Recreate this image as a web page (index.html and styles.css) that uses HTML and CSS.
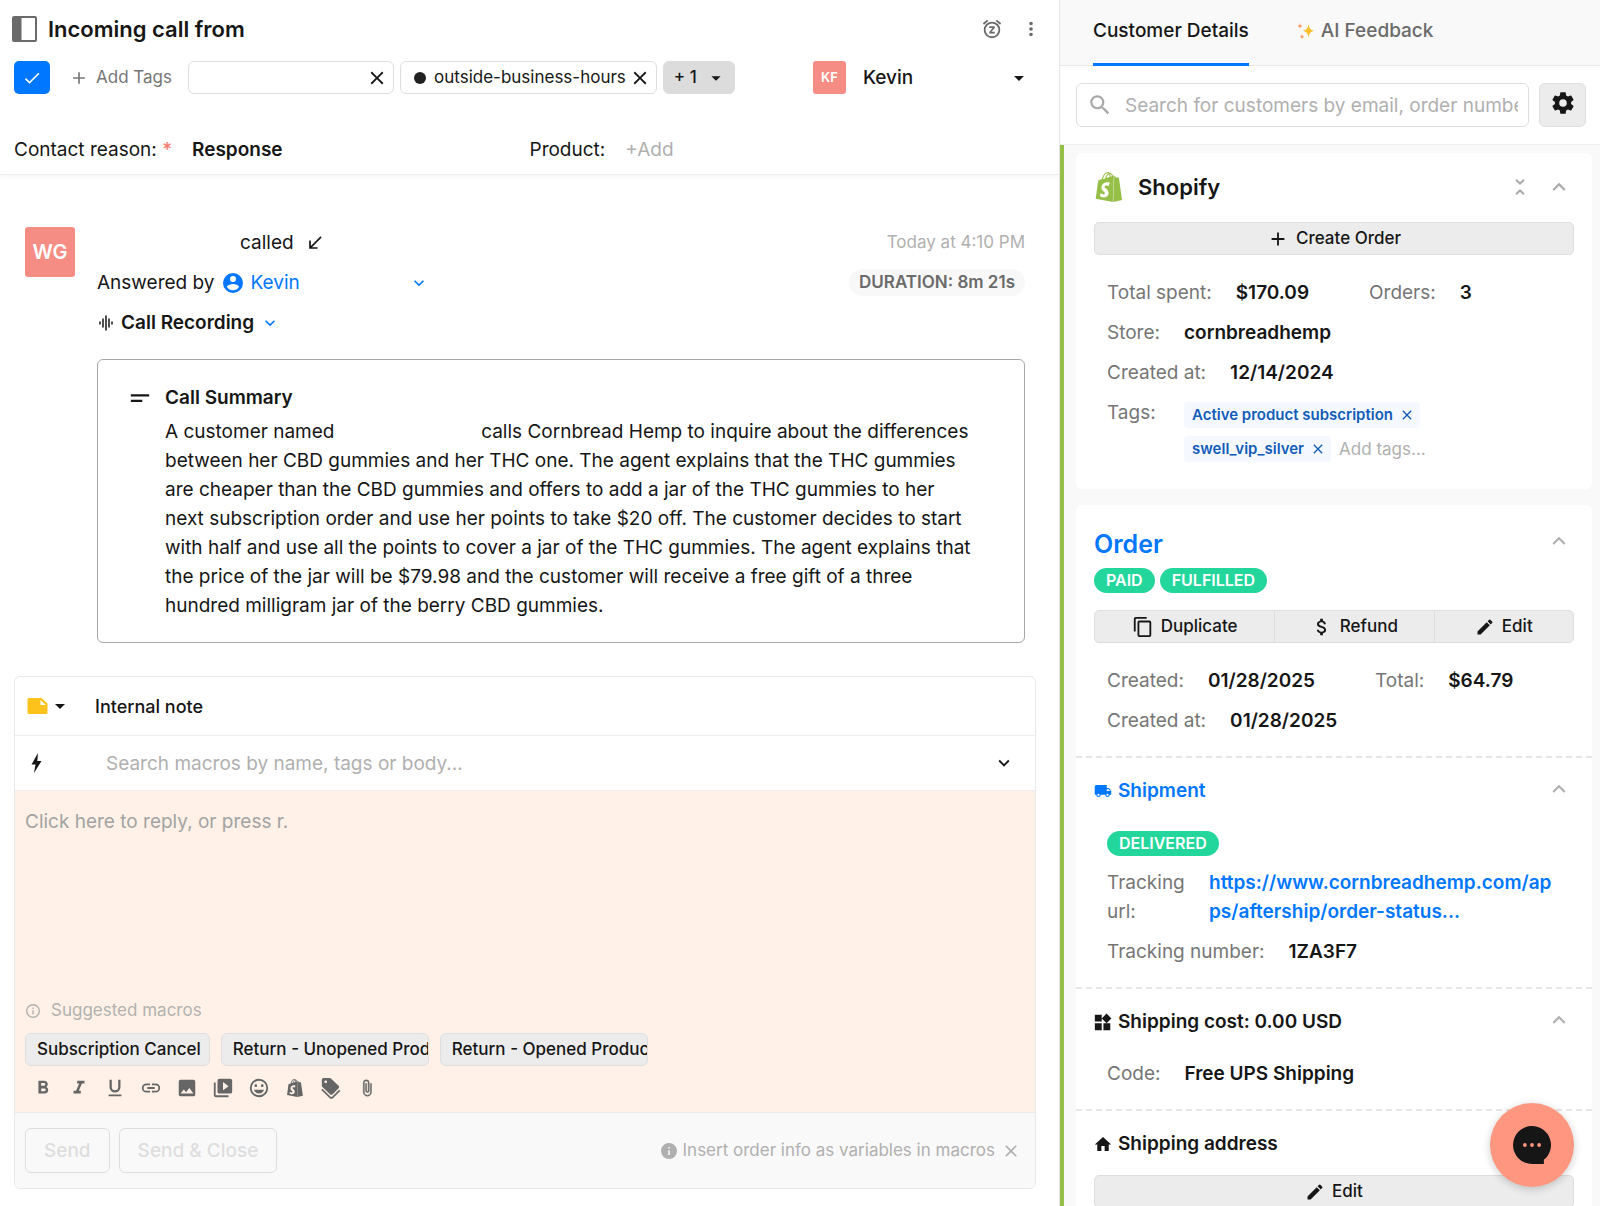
FILE: index.html
```html
<!DOCTYPE html>
<html lang="en">
<head>
<meta charset="utf-8">
<meta name="viewport" content="width=device-width, initial-scale=1">
<title>Incoming call</title>
<link rel="stylesheet" href="styles.css">
</head>
<body>
<svg class="sprite" aria-hidden="true">
  <symbol id="i-panel" viewBox="0 0 25 26"><rect x="1" y="1" width="23" height="24" rx="1" fill="none" stroke="currentColor" stroke-width="2"/><path d="M1 1h8.500v24H1z"/></symbol>
  <symbol id="i-check" viewBox="0 0 24 24"><path d="M9 16.170 4.830 12l-1.420 1.410L9 19 21 7l-1.410-1.410z"/></symbol>
  <symbol id="i-plus" viewBox="0 0 24 24"><path d="M19 13h-6v6h-2v-6H5v-2h6V5h2v6h6v2z"/></symbol>
  <symbol id="i-close" viewBox="0 0 24 24"><path d="M19 6.410 17.590 5 12 10.590 6.410 5 5 6.410 10.590 12 5 17.590 6.410 19 12 13.410 17.590 19 19 17.590 13.410 12z"/></symbol>
  <symbol id="i-drop" viewBox="0 0 24 24"><path d="m7 10 5 5 5-5z"/></symbol>
  <symbol id="i-snooze" viewBox="0 0 24 24"><path d="m22 5.720-4.600-3.860-1.290 1.530 4.600 3.860L22 5.720zM7.880 3.390 6.600 1.860 2 5.710l1.290 1.530 4.590-3.850zM12 4a9 9 0 1 0 0 18 9 9 0 0 0 0-18zm0 16a7 7 0 1 1 0-14 7 7 0 0 1 0 14zM9 11h3.630L9 15.200V17h6v-2h-3.630L15 10.800V9H9v2z"/></symbol>
  <symbol id="i-more" viewBox="0 0 24 24"><path d="M12 8a2 2 0 1 0 0-4 2 2 0 0 0 0 4zm0 2a2 2 0 1 0 0 4 2 2 0 0 0 0-4zm0 6a2 2 0 1 0 0 4 2 2 0 0 0 0-4z"/></symbol>
  <symbol id="i-southwest" viewBox="0 0 24 24"><path d="M20 5.410 18.590 4 7 15.590V9H5v10h10v-2H8.410z"/></symbol>
  <symbol id="i-user" viewBox="2 2 20 20"><path d="M12 2a10 10 0 1 0 0 20 10 10 0 0 0 0-20zm0 3a3 3 0 1 1 0 6 3 3 0 0 1 0-6zm0 14.200a7.200 7.200 0 0 1-6-3.220c.03-1.990 4-3.080 6-3.080s5.970 1.090 6 3.080a7.200 7.200 0 0 1-6 3.220z"/></symbol>
  <symbol id="i-down" viewBox="0 0 24 24"><path d="M7.410 8.590 12 13.170l4.590-4.580L18 10l-6 6-6-6z"/></symbol>
  <symbol id="i-up" viewBox="0 0 24 24"><path d="m12 8-6 6 1.410 1.410L12 10.830l4.590 4.580L18 14z"/></symbol>
  <symbol id="i-collapse" viewBox="0 0 24 24"><path d="M7.410 18.590 8.830 20 12 16.830 15.170 20l1.410-1.410L12 14l-4.590 4.590zm9.180-13.180L15.170 4 12 7.170 8.830 4 7.410 5.410 12 10l4.590-4.590z"/></symbol>
  <symbol id="i-wave" viewBox="0 0 24 24"><path d="M7 18h2V6H7v12zm4 4h2V2h-2v20zm-8-8h2v-4H3v4zm12 4h2V6h-2v12zm4-8v4h2v-4h-2z"/></symbol>
  <symbol id="i-text" viewBox="0 0 24 24"><path d="M2 8h20v2.300H2zM2 14h12.500v2.300H2z"/></symbol>
  <symbol id="i-note" viewBox="0 0 20 16"><path d="M1.500 0H14l6 5.500v9a1.500 1.500 0 0 1-1.500 1.500h-17A1.500 1.500 0 0 1 0 14.500v-13A1.500 1.500 0 0 1 1.500 0z" fill="#fdc31c"/><path d="M13 2v5h5.200z" fill="#fff"/></symbol>
  <symbol id="i-bolt" viewBox="0 0 12 20"><path d="M7.500 0 1 11.500h4L3.500 20 11 8H6.800z"/></symbol>
  <symbol id="i-info-o" viewBox="2 2 20 20"><path d="M11 7h2v2h-2zm0 4h2v6h-2zm1-9a10 10 0 1 0 0 20 10 10 0 0 0 0-20zm0 18a8 8 0 1 1 0-16 8 8 0 0 1 0 16z"/></symbol>
  <symbol id="i-info" viewBox="2 2 20 20"><path d="M12 2a10 10 0 1 0 0 20 10 10 0 0 0 0-20zm1 15h-2v-6h2v6zm0-8h-2V7h2v2z"/></symbol>
  <symbol id="i-bold" viewBox="0 0 24 24"><path d="M15.600 10.790c.97-.67 1.650-1.770 1.650-2.790 0-2.260-1.750-4-4-4H7v14h7.040c2.090 0 3.710-1.700 3.710-3.790 0-1.520-.86-2.820-2.150-3.420zM10 6.500h3a1.500 1.500 0 0 1 0 3h-3v-3zm3.500 9H10v-3h3.500a1.500 1.500 0 0 1 0 3z"/></symbol>
  <symbol id="i-italic" viewBox="0 0 24 24"><path d="M10 4v3h2.210l-3.420 8H6v3h8v-3h-2.210l3.420-8H18V4z"/></symbol>
  <symbol id="i-underline" viewBox="0 0 24 24"><path d="M12 17a6 6 0 0 0 6-6V3h-2.500v8a3.500 3.500 0 0 1-7 0V3H6v8a6 6 0 0 0 6 6zm-7 2v2h14v-2H5z"/></symbol>
  <symbol id="i-link" viewBox="0 0 24 24"><path d="M3.900 12A3.100 3.100 0 0 1 7 8.900h4V7H7a5 5 0 0 0 0 10h4v-1.900H7A3.100 3.100 0 0 1 3.900 12zM8 13h8v-2H8v2zm9-6h-4v1.900h4a3.100 3.100 0 0 1 0 6.200h-4V17h4a5 5 0 0 0 0-10z"/></symbol>
  <symbol id="i-image" viewBox="0 0 24 24"><path d="M21 19V5a2 2 0 0 0-2-2H5a2 2 0 0 0-2 2v14a2 2 0 0 0 2 2h14a2 2 0 0 0 2-2zM8.500 13.500l2.500 3.010L14.500 12l4.500 6H5l3.500-4.500z"/></symbol>
  <symbol id="i-video" viewBox="0 0 24 24"><path d="M4 6H2v14a2 2 0 0 0 2 2h14v-2H4V6zm16-4H8a2 2 0 0 0-2 2v12a2 2 0 0 0 2 2h12a2 2 0 0 0 2-2V4a2 2 0 0 0-2-2zm-8 12.500v-9l6 4.500-6 4.500z"/></symbol>
  <symbol id="i-smile" viewBox="0 0 24 24"><path d="M11.990 2a10 10 0 1 0 .02 20 10 10 0 0 0-.02-20zM12 20a8 8 0 1 1 0-16 8 8 0 0 1 0 16zm3.500-9a1.500 1.500 0 1 0 0-3 1.500 1.500 0 0 0 0 3zm-7 0a1.500 1.500 0 1 0 0-3 1.500 1.500 0 0 0 0 3zm3.500 7a6 6 0 0 0 5.500-4h-11A6 6 0 0 0 12 18z"/></symbol>
  <symbol id="i-bag" viewBox="0 0 24 24"><path d="M15.337 23.979l7.216-1.561s-2.604-17.613-2.625-17.730c-.018-.116-.114-.192-.211-.192s-1.929-.136-1.929-.136-1.275-1.274-1.439-1.411c-.045-.037-.075-.057-.121-.074l-.914 21.104h.023zM11.710 11.305s-.81-.424-1.774-.424c-1.447 0-1.504.906-1.504 1.141 0 1.232 3.240 1.715 3.240 4.629 0 2.295-1.440 3.760-3.406 3.760-2.354 0-3.540-1.465-3.540-1.465l.646-2.086s1.245 1.066 2.280 1.066c.675 0 .975-.545.975-.932 0-1.619-2.654-1.694-2.654-4.359-.034-2.237 1.571-4.416 4.827-4.416 1.257 0 1.875.361 1.875.361l-.945 2.715-.02.01zM11.170.83c.136 0 .271.038.405.135-.984.465-2.064 1.639-2.508 3.992-.656.213-1.293.405-1.889.578C7.697 3.750 8.951.84 11.170.84V.83zm1.235 2.949v.135c-.754.232-1.583.484-2.394.736.466-1.777 1.333-2.645 2.085-2.971.193.501.309 1.176.309 2.100zm.539-2.234c.694.074 1.141.867 1.429 1.755-.349.114-.735.231-1.158.366v-.252c0-.752-.096-1.371-.271-1.871v.002zm2.992 1.289c-.02 0-.06.021-.078.021s-.289.075-.714.210c-.423-1.233-1.176-2.370-2.508-2.370h-.115C12.135.209 11.669 0 11.265 0 8.159 0 6.675 3.877 6.210 5.846c-1.194.365-2.063.636-2.160.674-.675.213-.694.232-.772.870-.075.462-1.830 14.063-1.830 14.063L15.009 24l.927-21.166z"/></symbol>
  <symbol id="i-tags" viewBox="0 0 24 24"><path d="M4 1h6.500a2 2 0 0 1 1.400.6l8.400 8a2 2 0 0 1 0 2.800l-6.500 6.300a2 2 0 0 1-2.800 0L2.600 11A2 2 0 0 1 2 9.600V3a2 2 0 0 1 2-2zm2.200 2.700a1.500 1.500 0 1 0 0 3 1.500 1.500 0 0 0 0-3z"/><path d="m2 13.500 9 8.700a2 2 0 0 0 2.800 0l7.700-7.700" fill="none" stroke="currentColor" stroke-width="1.800"/></symbol>
  <symbol id="i-clip" viewBox="0 0 24 24"><path d="M16.500 6v11.500a4 4 0 0 1-8 0V5a2.500 2.500 0 0 1 5 0v10.500a1 1 0 0 1-2 0V6H10v9.500a2.500 2.500 0 0 0 5 0V5a4 4 0 0 0-8 0v12.500a5.500 5.500 0 0 0 11 0V6h-1.500z" stroke="currentColor" stroke-width=".6"/></symbol>
  <symbol id="i-search" viewBox="0 0 24 24"><path d="M15.500 14h-.79l-.28-.27A6.470 6.470 0 0 0 16 9.500 6.500 6.500 0 1 0 9.500 16c1.610 0 3.090-.59 4.230-1.570l.27.28v.79l5 4.990L20.490 19l-4.990-5zm-6 0a4.500 4.500 0 1 1 0-9 4.500 4.500 0 0 1 0 9z"/></symbol>
  <symbol id="i-gear" viewBox="0 0 24 24"><path d="M19.430 12.980c.04-.32.07-.64.07-.98s-.03-.66-.07-.98l2.110-1.650a.5.5 0 0 0 .12-.64l-2-3.460a.5.5 0 0 0-.61-.22l-2.490 1a7.300 7.300 0 0 0-1.690-.98l-.38-2.650A.49.490 0 0 0 14 2h-4a.49.490 0 0 0-.49.420l-.38 2.650c-.61.250-1.170.590-1.690.980l-2.490-1a.5.5 0 0 0-.61.220l-2 3.460a.49.490 0 0 0 .12.640l2.110 1.650c-.04.320-.07.650-.07.980s.03.660.07.980l-2.110 1.650a.5.5 0 0 0-.12.640l2 3.460c.12.220.39.300.61.220l2.490-1c.52.400 1.080.730 1.690.980l.38 2.650c.03.240.24.420.49.420h4c.25 0 .46-.18.490-.42l.38-2.650c.61-.25 1.170-.59 1.690-.98l2.490 1c.23.090.49 0 .61-.22l2-3.460a.5.5 0 0 0-.12-.64l-2.110-1.650zM12 15.500a3.500 3.500 0 1 1 0-7 3.500 3.500 0 0 1 0 7z"/></symbol>
  <symbol id="i-sparkle" viewBox="0 0 18 18"><path d="M11.500 2c.8 4.500 1.600 5.500 5.500 6.700-3.900 1.300-4.700 2.300-5.500 6.800-.8-4.500-1.600-5.500-5.500-6.800 3.900-1.200 4.700-2.200 5.500-6.700z" fill="#fdbf2d"/><path d="M3 1c.4 2 .8 2.400 2.500 3C3.800 4.600 3.400 5 3 7c-.4-2-.8-2.400-2.500-3C2.200 3.400 2.600 3 3 1zM5 12c.4 1.800.7 2.200 2.200 2.800C5.700 15.400 5.400 15.800 5 17.600c-.4-1.800-.7-2.200-2.200-2.800C4.300 14.200 4.600 13.800 5 12z" fill="#fb9d6b"/></symbol>
  <symbol id="i-copy" viewBox="0 0 24 24"><path d="M16 1H4a2 2 0 0 0-2 2v14h2V3h12V1zm3 4H8a2 2 0 0 0-2 2v14a2 2 0 0 0 2 2h11a2 2 0 0 0 2-2V7a2 2 0 0 0-2-2zm0 16H8V7h11v14z"/></symbol>
  <symbol id="i-dollar" viewBox="0 0 24 24"><path d="M11.800 10.900c-2.270-.59-3-1.200-3-2.150 0-1.090 1.010-1.850 2.700-1.850 1.780 0 2.440.85 2.500 2.100h2.210c-.07-1.720-1.120-3.300-3.210-3.810V3h-3v2.160c-1.940.42-3.500 1.680-3.500 3.610 0 2.310 1.910 3.460 4.700 4.130 2.500.6 3 1.480 3 2.410 0 .69-.49 1.790-2.700 1.790-2.060 0-2.870-.92-2.980-2.100h-2.200c.12 2.190 1.760 3.420 3.680 3.830V21h3v-2.150c1.950-.37 3.500-1.500 3.500-3.550 0-2.840-2.430-3.810-4.700-4.400z"/></symbol>
  <symbol id="i-edit" viewBox="0 0 24 24"><path d="M3 17.250V21h3.750L17.810 9.940l-3.750-3.750L3 17.250zM20.710 7.040a1 1 0 0 0 0-1.410l-2.340-2.340a1 1 0 0 0-1.410 0l-1.830 1.830 3.750 3.750 1.830-1.830z"/></symbol>
  <symbol id="i-truck" viewBox="0 3 24 18"><path d="M20 8h-3V4H3a2 2 0 0 0-2 2v11h2a3 3 0 0 0 6 0h6a3 3 0 0 0 6 0h2v-5l-3-4zM6 18.500a1.500 1.500 0 1 1 0-3 1.500 1.500 0 0 1 0 3zm13.500-9 1.960 2.500H17V9.500h2.500zm-1.500 9a1.500 1.500 0 1 1 0-3 1.500 1.500 0 0 1 0 3z"/></symbol>
  <symbol id="i-widgets" viewBox="2 1 21 21"><path d="M13 13v8h8v-8h-8zM3 21h8v-8H3v8zM3 3v8h8V3H3zm13.660-1.310L11 7.340 16.660 13l5.660-5.660-5.660-5.650z"/></symbol>
  <symbol id="i-home" viewBox="1 1 22 21"><path d="M10 20v-6h4v6h5v-8h3L12 3 2 12h3v8z"/></symbol>
  <symbol id="i-chat" viewBox="0 0 40 40"><path d="M20 0a20 20 0 1 0 0 40h12.500V35.600A20 20 0 0 0 20 0z"/><g fill="#ff9780"><circle cx="12.500" cy="20" r="2"/><circle cx="20" cy="20" r="2"/><circle cx="27.500" cy="20" r="2"/></g></symbol>
</svg>

<div class="app">
  <main class="ticket">
    <header class="ticket-head">
      <div class="title-row">
        <button class="bare" aria-label="Toggle ticket list"><svg class="panel-icon grey"><use href="#i-panel"/></svg></button>
        <h1>Incoming call from</h1>
        <div class="title-actions">
          <button class="bare grey" aria-label="Snooze"><svg class="s22"><use href="#i-snooze"/></svg></button>
          <button class="bare grey" aria-label="More actions"><svg class="s22"><use href="#i-more"/></svg></button>
        </div>
      </div>
      <div class="tag-row">
        <button class="done" aria-label="Close ticket"><svg class="s20"><use href="#i-check"/></svg></button>
        <button class="bare add-tags"><svg class="s20"><use href="#i-plus"/></svg>Add Tags</button>
        <div class="tags">
          <span class="tag tag-blank"><button class="bare" aria-label="Remove tag"><svg class="s22"><use href="#i-close"/></svg></button></span>
          <span class="tag"><i class="dot"></i>outside-business-hours<button class="bare" aria-label="Remove tag"><svg class="s22"><use href="#i-close"/></svg></button></span>
          <button class="more-tags">+ 1<svg class="s22"><use href="#i-drop"/></svg></button>
        </div>
        <button class="bare assignee"><span class="avatar avatar-s">KF</span>Kevin<svg class="s24"><use href="#i-drop"/></svg></button>
      </div>
      <div class="field-row">
        <div class="field"><span>Contact reason: <b class="req">*</b></span><strong>Response</strong></div>
        <div class="field"><span>Product:</span><button class="bare faint">+Add</button></div>
      </div>
    </header>

    <article class="message">
      <span class="avatar avatar-l">WG</span>
      <div class="message-body">
        <div class="line"><span class="caller">called</span><svg class="s20"><use href="#i-southwest"/></svg><time class="end faint small">Today at 4:10 PM</time></div>
        <div class="line"><span>Answered by</span><button class="bare agent"><svg class="s20"><use href="#i-user"/></svg>Kevin<svg class="s20 end"><use href="#i-down"/></svg></button><span class="end duration">DURATION: 8m 21s</span></div>
        <div class="line"><svg class="s18"><use href="#i-wave"/></svg><strong>Call Recording</strong><button class="bare blue" aria-label="Show recording"><svg class="s20"><use href="#i-down"/></svg></button></div>
        <section class="summary">
          <svg class="s22"><use href="#i-text"/></svg>
          <div>
            <h2>Call Summary</h2>
            <p>A customer named <span class="blank-name"></span> calls Cornbread Hemp to inquire about the differences between her CBD gummies and her THC one. The agent explains that the THC gummies are cheaper than the CBD gummies and offers to add a jar of the THC gummies to her next subscription order and use her points to take $20 off. The customer decides to start with half and use all the points to cover a jar of the THC gummies. The agent explains that the price of the jar will be $79.98 and the customer will receive a free gift of a three hundred milligram jar of the berry CBD gummies.</p>
          </div>
        </section>
      </div>
    </article>

    <section class="composer">
      <div class="composer-type"><button class="bare type-pick" aria-label="Message type"><svg class="note-icon"><use href="#i-note"/></svg><svg class="s24"><use href="#i-drop"/></svg></button><span>Internal note</span></div>
      <div class="composer-macro"><svg class="bolt-icon"><use href="#i-bolt"/></svg><input type="text" aria-label="Search macros" placeholder="Search macros by name, tags or body..."><button class="bare" aria-label="Show macros"><svg class="s22"><use href="#i-down"/></svg></button></div>
      <div class="editor">
        <textarea aria-label="Reply" placeholder="Click here to reply, or press r."></textarea>
        <div class="suggested"><svg class="s14"><use href="#i-info-o"/></svg>Suggested macros</div>
        <div class="chips"><button class="chip">Subscription Cancel</button><button class="chip">Return - Unopened Product</button><button class="chip">Return - Opened Product</button></div>
        <div class="tools">
          <button class="bare" aria-label="Bold"><svg class="s22"><use href="#i-bold"/></svg></button>
          <button class="bare" aria-label="Italic"><svg class="s22"><use href="#i-italic"/></svg></button>
          <button class="bare" aria-label="Underline"><svg class="s22"><use href="#i-underline"/></svg></button>
          <button class="bare" aria-label="Link"><svg class="s22"><use href="#i-link"/></svg></button>
          <button class="bare" aria-label="Image"><svg class="s22"><use href="#i-image"/></svg></button>
          <button class="bare" aria-label="Video"><svg class="s22"><use href="#i-video"/></svg></button>
          <button class="bare" aria-label="Emoji"><svg class="s22"><use href="#i-smile"/></svg></button>
          <button class="bare" aria-label="Products"><svg class="s18"><use href="#i-bag"/></svg></button>
          <button class="bare" aria-label="Discounts"><svg class="s22"><use href="#i-tags"/></svg></button>
          <button class="bare" aria-label="Attach"><svg class="s18"><use href="#i-clip"/></svg></button>
        </div>
      </div>
      <footer class="composer-foot">
        <button class="send" disabled>Send</button>
        <button class="send" disabled>Send &amp; Close</button>
        <span class="end hint"><svg class="s16"><use href="#i-info"/></svg>Insert order info as variables in macros<button class="bare" aria-label="Dismiss"><svg class="s20"><use href="#i-close"/></svg></button></span>
      </footer>
    </section>
  </main>

  <aside class="side">
    <nav class="tabs"><a class="tab tab-on" href="#details">Customer Details</a><a class="tab" href="#feedback"><svg class="s18"><use href="#i-sparkle"/></svg>AI Feedback</a></nav>
    <div class="search-row">
      <label class="search"><svg class="s26"><use href="#i-search"/></svg><input type="text" aria-label="Search customers" placeholder="Search for customers by email, order number"></label>
      <button class="gear" aria-label="Settings"><svg class="s26"><use href="#i-gear"/></svg></button>
    </div>
    <div class="widgets" id="details">
      <section class="card">
        <div class="part">
          <div class="card-head"><svg class="s30 shop"><use href="#i-bag"/></svg><h2>Shopify</h2><div class="head-actions"><button class="bare" aria-label="Collapse all"><svg class="s24"><use href="#i-collapse"/></svg></button><button class="bare" aria-label="Collapse"><svg class="s26"><use href="#i-up"/></svg></button></div></div>
          <button class="wide"><svg class="s22"><use href="#i-plus"/></svg>Create Order</button>
          <dl class="facts">
            <div><dt>Total spent:</dt><dd>$170.09</dd><dt class="second">Orders:</dt><dd>3</dd></div>
            <div><dt>Store:</dt><dd>cornbreadhemp</dd></div>
            <div><dt>Created at:</dt><dd>12/14/2024</dd></div>
            <div><dt class="tags-label">Tags:</dt><dd class="label-list"><span class="label">Active product subscription<button class="bare" aria-label="Remove"><svg class="s16"><use href="#i-close"/></svg></button></span><span class="label">swell_vip_silver<button class="bare" aria-label="Remove"><svg class="s16"><use href="#i-close"/></svg></button></span><input class="add-label" type="text" aria-label="Add tags" placeholder="Add tags..."></dd></div>
          </dl>
        </div>
      </section>
      <section class="card">
        <div class="part order">
          <div class="order-head"><h2><a href="#order">Order</a></h2><button class="bare faint" aria-label="Collapse"><svg class="s26"><use href="#i-up"/></svg></button></div>
          <div class="pills"><span class="pill">PAID</span><span class="pill">FULFILLED</span></div>
          <div class="group"><button><svg class="s22"><use href="#i-copy"/></svg>Duplicate</button><button><svg class="s22"><use href="#i-dollar"/></svg>Refund</button><button><svg class="s20"><use href="#i-edit"/></svg>Edit</button></div>
          <dl class="facts">
            <div><dt>Created:</dt><dd>01/28/2025</dd><dt class="second">Total:</dt><dd>$64.79</dd></div>
            <div><dt>Created at:</dt><dd>01/28/2025</dd></div>
          </dl>
        </div>
        <div class="part">
          <div class="part-head"><h3><a href="#shipment"><svg class="s18"><use href="#i-truck"/></svg>Shipment</a></h3><button class="bare faint" aria-label="Collapse"><svg class="s26"><use href="#i-up"/></svg></button></div>
          <dl class="facts">
            <div class="status"><dd><span class="pill">DELIVERED</span></dd></div>
            <div><dt class="narrow">Tracking url:</dt><dd class="url"><a href="#track">https://www.cornbreadhemp.com/apps/aftership/order-status...</a></dd></div>
            <div><dt>Tracking number:</dt><dd>1ZA3F7</dd></div>
          </dl>
        </div>
        <div class="part">
          <div class="part-head"><h3><svg class="s18"><use href="#i-widgets"/></svg>Shipping cost: 0.00 USD</h3><button class="bare faint" aria-label="Collapse"><svg class="s26"><use href="#i-up"/></svg></button></div>
          <dl class="facts"><div><dt>Code:</dt><dd>Free UPS Shipping</dd></div></dl>
        </div>
        <div class="part">
          <div class="part-head"><h3><svg class="s18"><use href="#i-home"/></svg>Shipping address</h3></div>
          <button class="wide"><svg class="s20"><use href="#i-edit"/></svg>Edit</button>
        </div>
      </section>
    </div>
  </aside>
</div>
<button class="fab" aria-label="Open chat"><svg class="chat-icon"><use href="#i-chat"/></svg></button>
</body>
</html>
```
FILE: styles.css
```css
* { box-sizing: border-box; }
body { margin: 0; font: 400 19px/29px Inter, "Liberation Sans", sans-serif; color: #161616; background: #fff; }
h1, h2, h3, p, dl, dd { margin: 0; }
button, input, textarea { font: inherit; color: inherit; margin: 0; }
button { cursor: pointer; }
a { color: #07f; text-decoration: none; }
strong, h2, h3, dd { font-weight: 600; }
svg { display: block; flex: none; fill: currentColor; }
.sprite { position: absolute; width: 0; height: 0; }
.s14 { width: 14px; height: 14px; }
.s16 { width: 16px; height: 16px; }
.s18 { width: 18px; height: 18px; }
.s20 { width: 20px; height: 20px; }
.s22 { width: 22px; height: 22px; }
.s24 { width: 24px; height: 24px; }
.s26 { width: 26px; height: 26px; }
.s30 { width: 30px; height: 30px; }
.bare { border: 0; padding: 0; background: none; display: flex; align-items: center; }
.grey { color: #6a6a6a; }
.faint { color: #b0b0b0; }
.blue { color: #07f; }
.small { font-size: 17px; }
.end { margin-left: auto; }

.app { display: grid; grid-template-columns: minmax(0, 1fr) 541px; height: 100vh; overflow: hidden; }
.ticket { display: flex; flex-direction: column; min-width: 0; }

.ticket-head { padding: 13px 14px 10px; border-bottom: 1px solid #eee; box-shadow: 0 2px 4px #0000000a; }
.title-row { display: flex; align-items: center; gap: 11px; height: 32px; }
.panel-icon { width: 25px; height: 26px; }
h1 { font-size: 22px; font-weight: 600; }
.title-row > .bare { margin-left: -2px; }
.title-actions { display: flex; gap: 17px; margin-left: auto; }
.title-actions .bare:last-child { margin-right: 3px; }
.tag-row { display: flex; align-items: center; margin-top: 16px; font-size: 17px; height: 33px; }
.done { width: 36px; height: 33px; border: 0; border-radius: 5px; background: #07f; color: #fff; display: flex; align-items: center; justify-content: center; padding: 0; }
.add-tags { gap: 7px; margin: 0 16px 0 19px; color: #767676; }
.tags { display: flex; gap: 6px; }
.tag, .more-tags { display: flex; align-items: center; height: 33px; border: 1px solid #dedede; border-radius: 6px; padding: 0 5px 0 13px; white-space: nowrap; }
.tag .bare { margin-left: 3px; }
.tag-blank { width: 206px; justify-content: flex-end; }
.dot { width: 12px; height: 12px; border-radius: 50%; background: #222; margin-right: 8px; }
.more-tags { background: #dcdcdc; border-color: #dcdcdc; padding: 0 7px 0 10px; gap: 8px; font-weight: 500; }
.assignee { width: 218px; margin: 0 14px 0 auto; gap: 17px; font-size: 19px; font-weight: 500; }
.assignee svg { margin-left: auto; }
.avatar { display: flex; align-items: center; justify-content: center; background: #f68d85; color: #fff; font-weight: 600; }
.avatar-s { width: 33px; height: 33px; border-radius: 3px; font-size: 13px; }
.avatar-l { width: 50px; height: 50px; border-radius: 3px; font-size: 20px; }
.field-row { display: grid; grid-template-columns: 1fr 1fr; margin-top: 41px; }
.field { display: flex; gap: 20px; }
.req { color: #f57c70; font-weight: 500; }

.message { display: flex; align-items: flex-start; gap: 22px; padding: 52px 34px 33px 25px; }
.message-body { flex: 1; min-width: 0; padding-top: 1px; }
.line { display: flex; align-items: center; gap: 6px; height: 29px; margin-bottom: 11px; }
.caller { margin-left: 143px; margin-right: 5px; }
.agent { gap: 7px; width: 206px; margin-left: 3px; color: #07f; }
.duration { padding: 0 10px; border-radius: 14px; background: #f8f8f8; color: #6a6a6a; font-size: 17px; line-height: 27px; font-weight: 600; }
.summary { display: flex; gap: 14px; margin-top: 22px; padding: 23px 48px 22px 31px; border: 1px solid #a8a8a8; border-radius: 6px; }
.summary > svg { margin-top: 4px; }
.summary h2 { font-size: 19px; line-height: 29px; margin-bottom: 5px; }
.blank-name { display: inline-block; width: 136px; }

.composer { flex: 1; display: flex; flex-direction: column; margin: 0 23px 17px 14px; border: 1px solid #e8e8e8; border-radius: 6px; overflow: hidden; }
.composer-type { display: flex; align-items: center; height: 59px; padding: 0 12px; gap: 23px; border-bottom: 1px solid #eee; font-size: 18px; font-weight: 500; }
.note-icon { width: 21px; height: 16px; }
.composer-macro { display: flex; align-items: center; height: 55px; padding: 0 20px 0 15px; border-bottom: 1px solid #eee; }
.bolt-icon { width: 13px; height: 20px; margin-right: 63px; }
input { border: 0; outline: 0; background: none; padding: 0; min-width: 0; }
.composer-macro input { flex: 1; }
::placeholder { color: #b0b0b0; opacity: 1; }
.editor { flex: 1; display: flex; flex-direction: column; padding: 16px 10px 13px; background: #fff1e8; }
textarea { flex: 1; border: 0; outline: 0; padding: 0; resize: none; background: none; display: block; }
.editor ::placeholder { color: #a3a3a3; }
.suggested { display: flex; align-items: center; gap: 11px; color: #b3b1af; font-size: 17px; padding-left: 1px; }
.chips { display: flex; gap: 11px; margin-top: 8px; }
.chip { height: 33px; max-width: 208px; padding: 0 8px 0 11px; overflow: hidden; white-space: nowrap; text-align: left; border: 1px solid #dedede; border-radius: 6px; background: #ececec; font-size: 17px; font-weight: 500; }
.tools { display: flex; margin-top: 11px; color: #666; }
.tools .bare { width: 36px; height: 22px; justify-content: center; }
.composer-foot { display: flex; align-items: center; gap: 9px; height: 76px; padding: 0 13px 0 10px; border-top: 1px solid #eaeaea; background: #f9f9f9; }
.send { height: 45px; padding: 0 18px; border: 1px solid #dedede; border-radius: 6px; background: none; color: #dedede; font-weight: 500; }
.hint { display: flex; align-items: center; gap: 6px; font-size: 17px; color: #b0b0b0; }
.hint .bare { margin-right: 1px; }

.side { display: flex; flex-direction: column; min-height: 0; border-left: 1px solid #e6e6e6; }
.tabs { display: flex; gap: 48px; height: 66px; padding: 0 33px; background: #f9f9f9; border-bottom: 1px solid #e8e8e8; }
.tab { display: flex; align-items: center; gap: 6px; height: 66px; padding-bottom: 2px; border-bottom: 3px solid transparent; color: #6a6a6a; font-weight: 500; }
.tab-on { color: #161616; border-color: #07f; }
.search-row { display: flex; gap: 10px; padding: 17px 14px 17px 16px; border-bottom: 1px solid #eee; }
.search { flex: 1; min-width: 0; display: flex; align-items: center; gap: 12px; height: 44px; padding: 0 10px; border: 1px solid #dedede; border-radius: 6px; color: #a8a8a8; }
.search input { flex: 1; }
.gear { width: 47px; height: 44px; padding: 0 0 4px; border: 1px solid #dedede; border-radius: 6px; background: #ececec; display: flex; align-items: center; justify-content: center; }
.widgets { flex: 1; min-height: 0; overflow: hidden; padding: 8px 8px 0 12px; border-left: 4px solid #96bf48; background: #f9f9f9; }
.card { background: #fff; border-radius: 6px; margin-bottom: 16px; padding-bottom: 6px; }
.part { padding: 18px 18px 21px; }
.part + .part { border-top: 2px dashed #e6e6e6; }
.card-head { display: flex; align-items: center; gap: 14px; height: 32px; }
.shop { color: #96bf48; }
.card-head h2 { font-size: 22px; }
.head-actions { display: flex; align-items: center; gap: 14px; margin-left: auto; margin-right: 2px; color: #a8a8a8; }
.wide { width: 100%; height: 33px; margin-top: 17px; border: 1px solid #dedede; border-radius: 5px; background: #ececec; display: flex; align-items: center; justify-content: center; gap: 7px; padding: 0; font-size: 17px; font-weight: 500; }
.card-head + .wide { margin-top: 19px; }
.facts { display: flex; flex-direction: column; gap: 11px; padding: 23px 13px 0; }
.facts > div { display: flex; gap: 24px; }
dt { color: #767676; white-space: nowrap; }
.second { margin-left: 36px; }
.tags-label { width: 53px; flex: none; }
.label-list { display: flex; flex-wrap: wrap; gap: 8px; padding-top: 4px; font-size: 15px; line-height: 26px; }
.label { display: flex; align-items: center; gap: 6px; height: 26px; padding: 0 5px 0 8px; border-radius: 4px; background: #f5f9ff; color: #115cb8; }
.add-label { width: 100px; height: 26px; font-size: 17px; font-weight: 400; }
.order-head, .part-head { display: flex; justify-content: space-between; }
.order { padding-top: 23px; }
.order-head h2 { font-size: 25px; line-height: 32px; }
.order-head .bare, .part-head .bare { height: 26px; margin-right: 2px; }
.pills { display: flex; gap: 5px; margin-top: 8px; }
.pill { display: inline-block; height: 25px; padding: 0 12px; border-radius: 13px; background: #22d69c; color: #fff; font-size: 16px; line-height: 25px; font-weight: 600; }
.group { display: grid; grid-template-columns: 9fr 8fr 7fr; height: 33px; margin-top: 17px; border: 1px solid #dedede; border-radius: 5px; background: #ececec; overflow: hidden; }
.group button { display: flex; align-items: center; justify-content: center; gap: 7px; padding: 0; border: 0; background: none; font-size: 17px; font-weight: 500; }
.group button + button { border-left: 1px solid #dedede; }
h3 { font-size: 19px; }
h3, h3 a { display: flex; align-items: center; gap: 6px; }
.narrow { width: 78px; flex: none; white-space: normal; }
.url { word-break: break-all; }

.fab { position: fixed; right: 26px; bottom: 19px; width: 84px; height: 84px; padding: 0; border: 0; border-radius: 50%; background: #ff9780; color: #161616; box-shadow: 0 2px 8px #0003; display: flex; align-items: center; justify-content: center; }
.chat-icon { width: 38px; height: 38px; }
```
